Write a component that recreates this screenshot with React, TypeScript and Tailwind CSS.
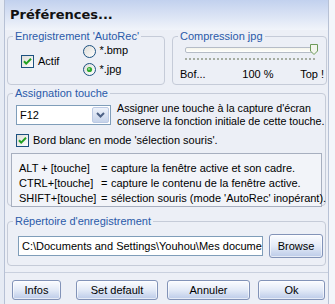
import { ReactNode } from 'react';

type GroupProps = {
  title: string;
  className?: string;
  children: ReactNode;
};

const GroupBox = ({ title, className, children }: GroupProps) => (
  <fieldset className={`border border-[#c5cbd8] rounded-[4px] min-w-0 ${className ?? ''}`}>
    <legend className="ml-[5px] px-[2px] leading-[12px] text-[#2a5aa9]">{title}</legend>
    {children}
  </fieldset>
);

const CheckBox = () => (
  <svg width="13" height="13" viewBox="0 0 13 13" className="shrink-0">
    <defs>
      <linearGradient id="cb" x1="0" y1="0" x2="1" y2="1">
        <stop offset="0" stopColor="#dcdcd7" />
        <stop offset="1" stopColor="#ffffff" />
      </linearGradient>
    </defs>
    <rect x="0.5" y="0.5" width="12" height="12" fill="url(#cb)" stroke="#1c5180" />
    <path d="M3 6.2 L5.2 8.6 L10 3.8" fill="none" stroke="#21a121" strokeWidth="2" />
  </svg>
);

const Radio = ({ checked }: { checked?: boolean }) => (
  <svg width="13" height="13" viewBox="0 0 13 13" className="shrink-0">
    <defs>
      <linearGradient id="rb" x1="0" y1="0" x2="1" y2="1">
        <stop offset="0" stopColor="#dcdcd7" />
        <stop offset="1" stopColor="#ffffff" />
      </linearGradient>
    </defs>
    <circle cx="6.5" cy="6.5" r="6" fill="url(#rb)" stroke="#1c5180" />
    {checked && <circle cx="6.5" cy="6.5" r="2.6" fill="#2eaa2e" />}
    {checked && <circle cx="6" cy="6" r="1" fill="#9fe09f" />}
  </svg>
);

const XpButton = ({ label, className }: { label: string; className?: string }) => (
  <button
    className={`h-[20px] rounded-[3px] border border-[#8293b8] bg-linear-to-b from-[#fbfcff] via-[#e3eaf7] to-[#bccbe8] text-black shadow-[inset_0_0_0_1px_rgba(255,255,255,0.6)] ${className ?? ''}`}
  >
    {label}
  </button>
);

const shortcuts = [
  { keys: 'ALT + [touche]', text: 'capture la fenêtre active et son cadre.' },
  { keys: 'CTRL+[touche]', text: 'capture le contenu de la fenêtre active.' },
  { keys: 'SHIFT+[touche]', text: "sélection souris (mode 'AutoRec' inopérant)." },
];

export default function App() {
  return (
    <div className="w-[335px] h-[304px] overflow-hidden flex bg-[#e3e8f2] font-['Liberation_Sans',Arial,sans-serif] text-[11px] text-black">
      <div className="w-[5px] shrink-0 border-r border-[#b7c1d5] bg-[#e6ebf4]" />
      <div className="w-[324px] shrink-0 flex flex-col bg-[#eceff6] border-r border-[#b7c1d5]">
        <div className="h-[30px] shrink-0 flex items-center pl-[5px] bg-linear-to-b from-[#c2d1ee] to-[#f1f4fa] font-['DejaVu_Sans',sans-serif] font-bold text-[13px] text-[#111]">
          Préférences...
        </div>

        <div className="flex">
          <GroupBox title="Enregistrement 'AutoRec'" className="ml-[2px] w-[158px] h-[55px]">
            <div className="flex pl-[13px]">
              <label className="flex items-center gap-[4px] mt-[13px] h-[13px]">
                <CheckBox />
                <span>Actif</span>
              </label>
              <div className="ml-[24px] mt-[3px] flex flex-col gap-[5px]">
                <label className="flex items-start gap-[3px] h-[13px]">
                  <Radio />
                  <span className="-mt-[3px]">*.bmp</span>
                </label>
                <label className="flex items-start gap-[3px] h-[13px]">
                  <Radio checked />
                  <span className="-mt-[2px]">*.jpg</span>
                </label>
              </div>
            </div>
          </GroupBox>

          <GroupBox title="Compression jpg" className="ml-[7px] w-[155px] h-[55px]">
            <div className="pl-[12px] pr-[8px] mt-[4px]">
              <div className="relative h-[8px]">
                <div className="absolute left-0 right-[3px] top-[1px] h-[6px] rounded-[2px] border border-[#b5bcc7] bg-linear-to-b from-[#f4f4ea] to-[#ffffff]" />
                <svg width="8" height="11" viewBox="0 0 8 11" className="absolute right-0 -top-[2px]">
                  <path d="M0.5 0.5 H7.5 V7 L4 10.5 L0.5 7 Z" fill="#f3f5ee" stroke="#6d9a5a" />
                </svg>
              </div>
              <div className="mt-[4px] mr-[3px] h-0 border-t-[2px] border-dotted border-[#a6ada2]" />
            </div>
            <div className="flex justify-between pl-[7px] pr-[2px] mt-[8px] leading-[12px]">
              <span>Bof...</span>
              <span className="ml-[10px]">100 %</span>
              <span>Top !</span>
            </div>
          </GroupBox>
        </div>

        <GroupBox title="Assignation touche" className="mx-[2px] mt-[2px] h-[119px]">
          <div className="flex items-center pl-[8px] mt-[3px]">
            <div className="w-[95px] h-[20px] shrink-0 flex border border-[#7f9db9] bg-white">
              <span className="flex-1 pl-[3px] flex items-center">F12</span>
              <div className="w-[17px] m-[1px] rounded-[2px] flex items-center justify-center border border-[#bccae4] bg-linear-to-b from-[#eef2fa] to-[#c6d3ea]">
                <svg width="9" height="6" viewBox="0 0 9 6">
                  <path d="M1 1 L4.5 4.5 L8 1" fill="none" stroke="#4d6185" strokeWidth="2" />
                </svg>
              </div>
            </div>
            <div className="ml-[6px] leading-[13px] whitespace-nowrap text-[10.7px]">
              <div>Assigner une touche à la capture d'écran</div>
              <div>conserve la fonction initiale de cette touche.</div>
            </div>
          </div>
          <label className="flex items-center gap-[4px] pl-[8px] mt-[6px] h-[13px]">
            <CheckBox />
            <span>Bord blanc en mode 'sélection souris'.</span>
          </label>
          <div className="mx-[3px] mt-[6px] h-[54px] border border-[#a7afbf] bg-[#f2f4f9] pl-[7px] pt-[7px] leading-[15px] whitespace-nowrap">
            {shortcuts.map((s) => (
              <div key={s.keys} className="flex">
                <span className="shrink-0 min-w-[82px] pr-[3px]">{s.keys}</span>
                <span className="shrink-0 w-[10px]">=</span>
                <span>{s.text}</span>
              </div>
            ))}
          </div>
        </GroupBox>

        <GroupBox title="Répertoire d'enregistrement" className="mx-[2px] mt-[9px] h-[51px]">
          <div className="flex items-center pl-[10px] mt-[7px]">
            <div className="w-[245px] h-[20px] flex items-center pl-[3px] border border-[#7f9db9] bg-white overflow-hidden whitespace-nowrap">
              C:\Documents and Settings\Youhou\Mes documents
            </div>
            <XpButton label="Browse" className="ml-[6px] w-[54px] h-[24px]" />
          </div>
        </GroupBox>

        <div className="mt-[6px] border-t border-[#c9d0de] flex items-center pl-[7px] pt-[7px]">
          <XpButton label="Infos" className="w-[49px] border-[#6f82ab] from-[#e4ecfa] via-[#cad8f1] to-[#a9bde3]" />
          <XpButton label="Set default" className="ml-[15px] w-[82px]" />
          <XpButton label="Annuler" className="ml-[9px] w-[83px]" />
          <XpButton label="Ok" className="ml-[8px] w-[67px]" />
        </div>
      </div>
      <div className="flex-1 bg-[#f3f5fa]" />
    </div>
  );
}
